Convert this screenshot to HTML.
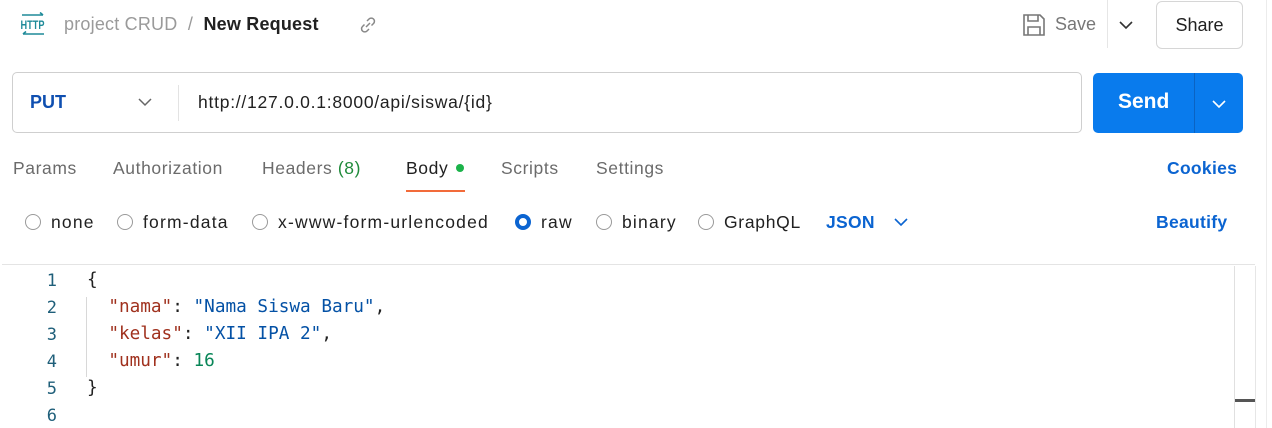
<!DOCTYPE html>
<html><head><meta charset="utf-8"><style>
*{margin:0;padding:0;box-sizing:border-box}
body{width:1272px;height:428px;background:#fff;font-family:"Liberation Sans",sans-serif;position:relative;overflow:hidden;color:#212121}
.a{position:absolute;white-space:nowrap}
.tab{position:absolute;top:158px;font-size:17.5px;letter-spacing:0.6px;color:#6b6b6b}
.radio{position:absolute;top:214px;width:16px;height:16px;border:1.5px solid #9a9a9a;border-radius:50%}
.rl{position:absolute;top:212px;font-size:17.5px;letter-spacing:1.2px;color:#212121}
.ln{position:absolute;left:0;width:57px;text-align:right;font-family:"DejaVu Sans Mono",monospace;font-size:17px;color:#1f5f7a}
.code{position:absolute;left:87px;font-family:"DejaVu Sans Mono",monospace;font-size:17.7px;white-space:pre}
.k{color:#a0311e}.s{color:#0451a5}.n{color:#098658}
</style></head><body>
<svg class="a" style="left:20px;top:12px" width="26" height="26" viewBox="0 0 26 26"><path d="M2 3H23M20 0.5L23 3" stroke="#1e8a99" stroke-width="1.6" fill="none"/><text x="0.5" y="17" font-family="Liberation Sans" font-size="12" font-weight="bold" fill="#1e8a99" textLength="24" lengthAdjust="spacingAndGlyphs">HTTP</text><path d="M3 22H24M6 19.5L3 22" stroke="#1e8a99" stroke-width="1.6" fill="none"/></svg>
<div class="a" style="left:64px;top:14px;font-size:18px;letter-spacing:0.2px;color:#9a9a9a">project CRUD&nbsp; /&nbsp; <span style="color:#212121;font-weight:bold">New Request</span></div>
<svg class="a" style="left:358px;top:15px" width="20" height="20" viewBox="0 0 20 20" fill="none" stroke="#888" stroke-width="1.5"><path d="M8 12l4-4M9 6l2-2a3 3 0 0 1 4.5 4.5l-2 2M11 14l-2 2a3 3 0 0 1-4.5-4.5l2-2"/></svg>
<svg class="a" style="left:1022px;top:13px" width="24" height="24" viewBox="0 0 24 24" fill="none" stroke="#777" stroke-width="1.6"><path d="M2 2h16l4 4v16H2z"/><path d="M6 2v6h10V2M6 22v-8h12v8"/></svg>
<div class="a" style="left:1055px;top:14px;font-size:18px;color:#777">Save</div>
<div class="a" style="left:1107px;top:0;width:1px;height:48px;background:#e6e6e6"></div>
<svg class="a" style="left:1118px;top:18px" width="16" height="14" viewBox="0 0 16 14"><path d="M2 4l6 6 6-6" stroke="#333" stroke-width="1.6" fill="none"/></svg>
<div class="a" style="left:1156px;top:1px;width:87px;height:48px;border:1px solid #d6d6d6;border-radius:6px;font-size:18px;text-align:center;line-height:46px">Share</div>
<div class="a" style="left:1266px;top:0;width:1px;height:428px;background:#ececec"></div>
<div class="a" style="left:12px;top:72px;width:1070px;height:61px;border:1px solid #cfcfcf;border-radius:5px"></div>
<div class="a" style="left:30px;top:92px;font-size:18px;font-weight:bold;color:#0f4fb0">PUT</div>
<svg class="a" style="left:137px;top:95px" width="16" height="14" viewBox="0 0 16 14"><path d="M2 4l6 6 6-6" stroke="#666" stroke-width="1.5" fill="none"/></svg>
<div class="a" style="left:178px;top:85px;width:1px;height:36px;background:#e3e3e3"></div>
<div class="a" style="left:198px;top:92px;font-size:17.5px;letter-spacing:0.75px;color:#212121">http://127.0.0.1:8000/api/siswa/{id}</div>
<div class="a" style="left:1093px;top:73px;width:150px;height:60px;background:#097bed;border-radius:5px"></div>
<div class="a" style="left:1194px;top:73px;width:1px;height:60px;background:#0a63c3"></div>
<div class="a" style="left:1118px;top:90px;font-size:21px;font-weight:bold;color:#fff">Send</div>
<svg class="a" style="left:1211px;top:97px" width="16" height="14" viewBox="0 0 16 14"><path d="M2 4l6 6 6-6" stroke="#fff" stroke-width="1.6" fill="none"/></svg>
<div class="tab" style="left:13px">Params</div>
<div class="tab" style="left:113px">Authorization</div>
<div class="tab" style="left:262px">Headers <span style="color:#1f8a3a">(8)</span></div>
<div class="tab" style="left:406px;color:#212121">Body</div>
<div class="a" style="left:456px;top:164px;width:8px;height:8px;border-radius:50%;background:#1bb34a"></div>
<div class="a" style="left:406px;top:190px;width:59px;height:2px;background:#f26b3a"></div>
<div class="tab" style="left:501px">Scripts</div>
<div class="tab" style="left:596px">Settings</div>
<div class="a" style="left:1167px;top:158px;font-size:17.5px;letter-spacing:0.3px;font-weight:bold;color:#0b64d1">Cookies</div>
<div class="radio" style="left:25px"></div><div class="rl" style="left:51px">none</div>
<div class="radio" style="left:117px"></div><div class="rl" style="left:143px">form-data</div>
<div class="radio" style="left:252px"></div><div class="rl" style="left:278px">x-www-form-urlencoded</div>
<div class="radio" style="left:515px;border:4.5px solid #0b64d1"></div><div class="rl" style="left:541px">raw</div>
<div class="radio" style="left:596px"></div><div class="rl" style="left:622px">binary</div>
<div class="radio" style="left:698px"></div><div class="rl" style="left:724px;letter-spacing:0.7px">GraphQL</div>
<div class="a" style="left:826px;top:212px;font-size:17.5px;letter-spacing:0.3px;font-weight:bold;color:#0b64d1">JSON</div>
<svg class="a" style="left:893px;top:215px" width="16" height="14" viewBox="0 0 16 14"><path d="M2 4l6 6 6-6" stroke="#0b64d1" stroke-width="1.6" fill="none"/></svg>
<div class="a" style="left:1156px;top:212px;font-size:17.5px;letter-spacing:0.3px;font-weight:bold;color:#0b64d1">Beautify</div>
<div class="a" style="left:2px;top:264px;width:1253px;height:1px;background:#e4e4e4"></div>
<div class="a" style="left:1234px;top:266px;width:1px;height:162px;background:#e0e0e0"></div>
<div class="a" style="left:1255px;top:266px;width:1px;height:162px;background:#e6e6e6"></div>
<div class="a" style="left:1235px;top:399px;width:20px;height:3px;background:#555"></div>
<div class="a" style="left:86px;top:297px;width:1px;height:80px;background:#d8d8d8"></div>
<div class="ln" style="top:271px">1</div><div class="ln" style="top:298px">2</div><div class="ln" style="top:325px">3</div><div class="ln" style="top:352px">4</div><div class="ln" style="top:379px">5</div><div class="ln" style="top:406px">6</div>
<div class="code" style="top:270px">{</div>
<div class="code" style="top:297px">  <span class="k">"nama"</span>: <span class="s">"Nama Siswa Baru"</span>,</div>
<div class="code" style="top:324px">  <span class="k">"kelas"</span>: <span class="s">"XII IPA 2"</span>,</div>
<div class="code" style="top:351px">  <span class="k">"umur"</span>: <span class="n">16</span></div>
<div class="code" style="top:378px">}</div>
</body></html>
